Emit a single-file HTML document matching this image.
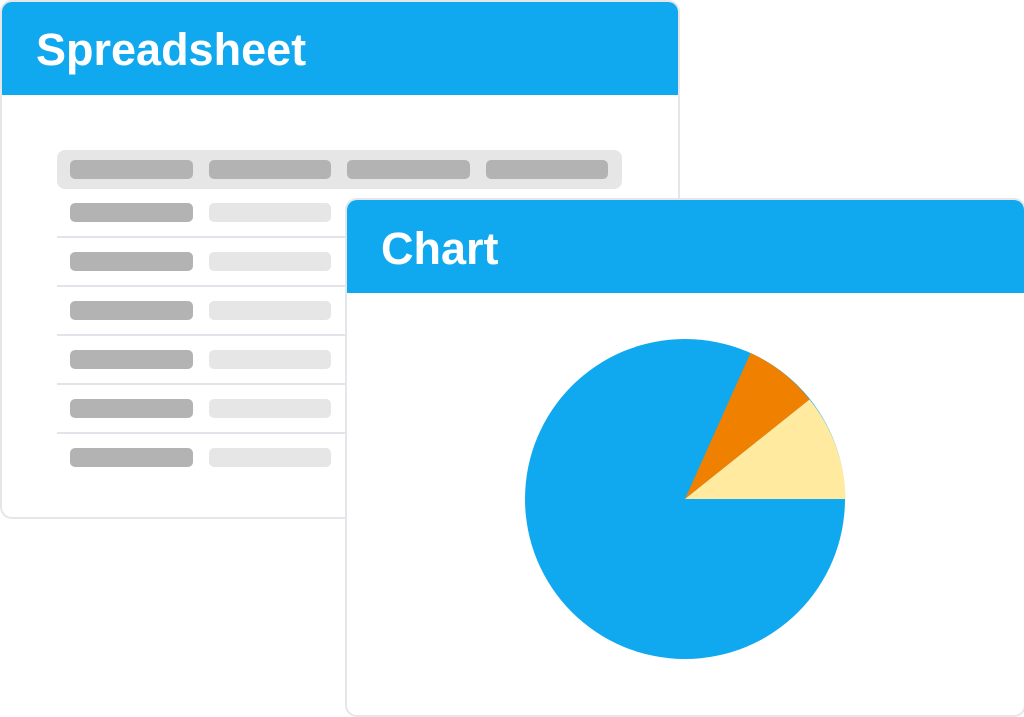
<!DOCTYPE html>
<html><head><meta charset="utf-8"><style>
html,body{margin:0;padding:0;width:1024px;height:717px;background:#fff;overflow:hidden;position:relative;font-family:"Liberation Sans",sans-serif}
.win{position:absolute;background:#fff;border:2px solid #e6e6ea;border-radius:12px;box-sizing:border-box;overflow:hidden}
.hdr{position:absolute;left:-2px;top:-2px;right:-2px;background:#10a8ef;color:#fff;font-weight:bold;font-size:45px}
.hdr span{position:absolute;top:0}
.b{position:absolute;height:19px;border-radius:5px}
.d{background:#b3b3b3}.l{background:#e6e6e6}
.ln{position:absolute;left:57px;width:300px;height:2px;background:#e4e3ec}
</style></head><body>
<div class="win" style="left:0;top:0;width:680px;height:519px">
  <div class="hdr" style="height:95px"><span style="left:36px;top:27px;line-height:45px">Spreadsheet</span></div>
</div>
<div style="position:absolute;left:57px;top:150px;width:565px;height:39px;background:#e6e6e6;border-radius:8px"></div>
<div class="b d" style="left:70px;top:160px;width:123px"></div>
<div class="b d" style="left:209px;top:160px;width:122px"></div>
<div class="b d" style="left:347px;top:160px;width:123px"></div>
<div class="b d" style="left:486px;top:160px;width:122px"></div>

<div class="b d" style="left:70px;top:203px;width:123px"></div><div class="b l" style="left:209px;top:203px;width:122px"></div>
<div class="ln" style="top:236px"></div>
<div class="b d" style="left:70px;top:252px;width:123px"></div><div class="b l" style="left:209px;top:252px;width:122px"></div>
<div class="ln" style="top:285px"></div>
<div class="b d" style="left:70px;top:301px;width:123px"></div><div class="b l" style="left:209px;top:301px;width:122px"></div>
<div class="ln" style="top:334px"></div>
<div class="b d" style="left:70px;top:350px;width:123px"></div><div class="b l" style="left:209px;top:350px;width:122px"></div>
<div class="ln" style="top:383px"></div>
<div class="b d" style="left:70px;top:399px;width:123px"></div><div class="b l" style="left:209px;top:399px;width:122px"></div>
<div class="ln" style="top:432px"></div>
<div class="b d" style="left:70px;top:448px;width:123px"></div><div class="b l" style="left:209px;top:448px;width:122px"></div>

<div class="win" style="left:345px;top:198px;width:681px;height:519px">
  <div class="hdr" style="height:95px"><span style="left:36px;top:28px;line-height:45px">Chart</span></div>
</div>
<svg style="position:absolute;left:0;top:0" width="1024" height="717">
  <circle cx="685" cy="499" r="160" fill="#10a8ef"/>
  <path d="M685 499 L750.5 353 A160 160 0 0 1 809.5 399.5 Z" fill="#f08000"/>
  <path d="M685 499 L809.5 399.5 A160.5 160.5 0 0 1 845.5 499 Z" fill="#ffeaa0"/>
</svg>
</body></html>
